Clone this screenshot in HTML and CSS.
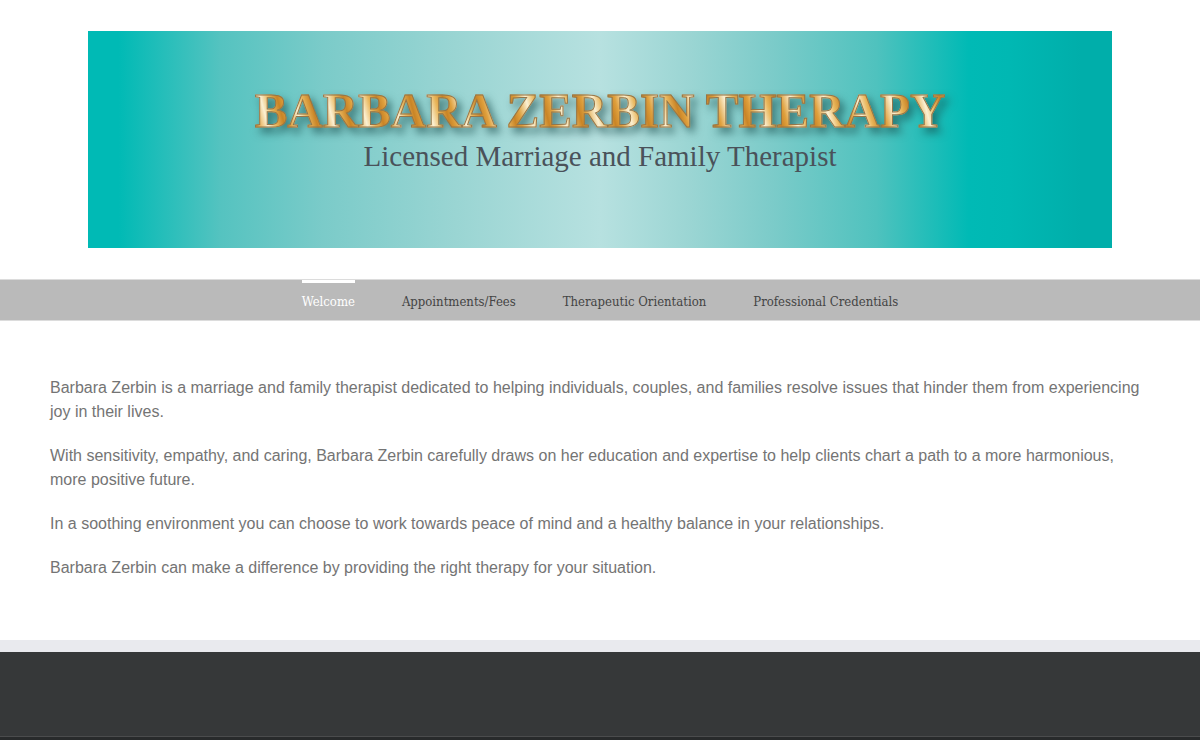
FILE: index.html
```html
<!DOCTYPE html>
<html lang="en">
<head>
<meta charset="utf-8">
<meta name="viewport" content="width=device-width, initial-scale=1">
<title>Barbara Zerbin Therapy</title>
<link rel="stylesheet" href="styles.css">
</head>
<body>
<header class="header">
  <div class="banner">
    <h1 class="banner-title">BARBARA ZERBIN THERAPY</h1>
    <p class="banner-subtitle">Licensed Marriage and Family Therapist</p>
  </div>
</header>
<nav class="nav" aria-label="Main">
  <a class="nav-link active" href="#welcome" aria-current="page">Welcome</a>
  <a class="nav-link" href="#appointments">Appointments/Fees</a>
  <a class="nav-link" href="#orientation">Therapeutic Orientation</a>
  <a class="nav-link" href="#credentials">Professional Credentials</a>
</nav>
<main class="content" id="welcome">
  <p>Barbara Zerbin is a marriage and family therapist dedicated to helping individuals, couples, and families resolve issues that hinder them from experiencing joy in their lives.</p>
  <p>With sensitivity, empathy, and caring, Barbara Zerbin carefully draws on her education and expertise to help clients chart a path to a more harmonious, more positive future.</p>
  <p>In a soothing environment you can choose to work towards peace of mind and a healthy balance in your relationships.</p>
  <p>Barbara Zerbin can make a difference by providing the right therapy for your situation.</p>
</main>
<footer class="footer"></footer>
</body>
</html>
```
FILE: styles.css
```css
* { box-sizing: border-box; }

body {
  display: flex;
  flex-direction: column;
  min-height: 100vh;
  margin: 0;
  background: #fff;
  color: #747474;
  font: 16px/24px "Liberation Sans", Arial, sans-serif;
}

.header { padding: 31px 30px; }

.banner {
  max-width: 1024px;
  margin: 0 auto;
  padding: 52px 20px 74px;
  text-align: center;
  background: linear-gradient(90deg, #00bab5 0%, #00bab5 3%, #55c3c0 13%, #7bcbc9 23%, #9ad5d3 36%, #b7e1e0 50%, #9ad5d3 59%, #7bcbc9 67%, #4fc2be 77%, #00bab5 86%, #00b8b3 90%, #00aeaa 97%, #00aeaa 100%);
}

.banner-title {
  display: inline-block;
  margin: 0;
  font: bold 49px/56px "Liberation Serif", "Times New Roman", serif;
  color: transparent;
  background: repeating-linear-gradient(75deg, #c98426 0, #dfa03d 6px, #fbf0d2 16px, #e9b65b 24px, #c98426 32px);
  -webkit-background-clip: text;
  background-clip: text;
  -webkit-text-stroke: 1px #94764a;
  filter: drop-shadow(4px 5px 4px rgba(20, 70, 70, .65));
}

.banner-subtitle {
  margin: 0;
  font: 29px/35px "Liberation Serif", "Times New Roman", serif;
  color: #4a525a;
}

.nav {
  display: flex;
  flex-wrap: wrap;
  justify-content: center;
  gap: 0 47px;
  background: #bababa;
  border-top: 1px solid #dcdcdc;
  border-bottom: 1px solid #dcdcdc;
}

.nav-link {
  border-top: 3px solid transparent;
  color: #444;
  font: 13px/37px "DejaVu Serif Condensed", "DejaVu Serif", serif;
  text-decoration: none;
}

.nav-link.active {
  border-top-color: #fff;
  color: #fff;
}

.content { padding: 55px 50px 60px; }

.content p { margin: 0 0 20px; }

.content p:last-child { margin-bottom: 0; }

.footer {
  flex: 1;
  min-height: 100px;
  background: linear-gradient(#4b4c4d, #4b4c4d) 0 calc(100% - 3px) / 100% 1px no-repeat, linear-gradient(#282a2b, #282a2b) 0 100% / 100% 3px no-repeat, #363839;
  border-top: 12px solid #e9eaee;
}
```
